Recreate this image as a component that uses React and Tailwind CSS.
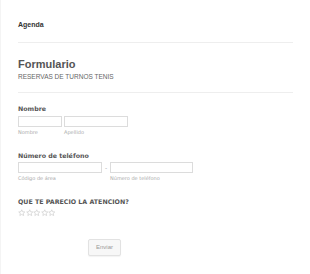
import React from "react";

const ARIAL = "font-['Liberation_Sans',Arial,sans-serif]";
const VERDANA = "font-['DejaVu_Sans',Verdana,sans-serif]";

// estrella vacía para la valoración
function Star() {
  return (
    <svg viewBox="0 0 24 24" className="w-[7.5px] h-[7.5px]" fill="none" stroke="#c8c8c8" strokeWidth="2" strokeLinejoin="round">
      <path d="M12 2.5l2.9 6.3 6.9.7-5.2 4.6 1.5 6.8L12 17.4l-6.1 3.5 1.5-6.8-5.2-4.6 6.9-.7z" />
    </svg>
  );
}

function Field({ className, label }) {
  return (
    <div className={`flex flex-col ${className}`}>
      <div className="h-[11px] border border-[#dcdcdc] bg-white" />
      <span className={`mt-[2px] text-[5px] leading-[6px] text-[#aaa] ${VERDANA}`}>{label}</span>
    </div>
  );
}

export default function App() {
  return (
    <div className="w-[310px] h-[274px] bg-white pl-[17px] pr-[17px] pt-[20px] border-l border-[#f4f4f4]">
      {/* cabecera */}
      <p className={`text-[7px] leading-[10px] font-bold text-[#333] ${ARIAL}`}>Agenda</p>
      <div className="mt-[12px] border-t border-[#eeeeee]" />

      <h1 className={`mt-[15px] text-[11px] leading-[12px] font-bold text-[#555] ${ARIAL}`}>Formulario</h1>
      <p className={`mt-[3px] text-[6.5px] leading-[8px] text-[#666] ${ARIAL}`}>RESERVAS DE TURNOS TENIS</p>
      <div className="mt-[11px] border-t border-[#eeeeee]" />

      {/* nombre */}
      <p className={`mt-[12px] text-[6.3px] leading-[8px] font-bold text-[#555] ${VERDANA}`}>Nombre</p>
      <div className="mt-[3px] flex gap-[2px]">
        <Field className="w-[44px]" label="Nombre" />
        <Field className="w-[64px]" label="Apellido" />
      </div>

      {/* teléfono */}
      <p className={`mt-[17px] text-[6.3px] leading-[8px] font-bold text-[#555] ${VERDANA}`}>Número de teléfono</p>
      <div className="mt-[2px] flex">
        <Field className="w-[84px]" label="Código de área" />
        <span className={`w-[8px] text-center text-[6px] leading-[11px] text-[#aaa] ${VERDANA}`}>-</span>
        <Field className="w-[83px]" label="Número de teléfono" />
      </div>

      {/* valoración */}
      <p className={`mt-[17px] text-[6.3px] leading-[8px] font-bold text-[#555] ${VERDANA}`}>QUE TE PARECIO LA ATENCION?</p>
      <div className="mt-[3px] flex">
        <Star />
        <Star />
        <Star />
        <Star />
        <Star />
      </div>

      <button
        className={`mt-[22px] ml-[70px] w-[33px] h-[17px] border border-[#e2e2e2] rounded-[2px] bg-[#f7f7f7] text-[6px] text-[#999] shadow-[0_1px_1px_rgba(0,0,0,0.05)] ${ARIAL}`}
      >
        Enviar
      </button>
    </div>
  );
}
